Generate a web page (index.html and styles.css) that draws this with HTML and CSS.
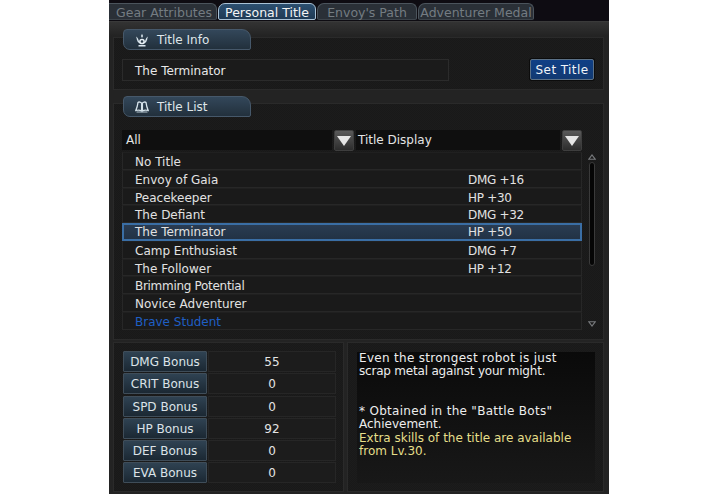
FILE: index.html
```html
<!DOCTYPE html>
<html lang="en">
<head>
<meta charset="utf-8">
<title>Personal Title</title>
<link rel="stylesheet" href="styles.css">
</head>
<body>
<div class="window">
  <nav class="tabs">
    <span class="tab tab-gear">Gear Attributes</span>
    <span class="tab tab-active">Personal Title</span>
    <span class="tab tab-path">Envoy's Path</span>
    <span class="tab tab-medal">Adventurer Medal</span>
  </nav>
  <main class="main">
    <section class="panel panel-info">
      <div class="label-tab">
        <svg class="icon" viewBox="0 0 14 14"><path d="M7 .8 8 3 7 5 6 3zM1 3.500l1.500 1.200L3 7 1.800 5.800zM13 3.500l-1.500 1.200L11 7l1.200-1.200z" fill="#dce8f0"/><path d="M2.200 5.500C2.800 8 3.800 9.300 5 10M11.800 5.500C11.200 8 10.200 9.300 9 10M3.500 12.800h7" fill="none" stroke="#dce8f0" stroke-width="1.400"/><circle cx="7" cy="8.500" r="2.100" fill="none" stroke="#e6eff5" stroke-width="1.500"/></svg>
        <span>Title Info</span>
      </div>
      <div class="info-row">
        <div class="field">The Terminator</div>
        <button class="set-btn">Set Title</button>
      </div>
    </section>
    <section class="panel panel-list">
      <div class="label-tab">
        <svg class="icon" viewBox="0 0 14 14"><path d="M6.600 3.200C5.800 2 3.800 1.700 3 2.400 2.700 5 2 7.800.8 10.500c2-.6 4.300-.5 5.800.5zM7.400 3.200C8.200 2 10.200 1.700 11 2.400c.3 2.600 1 5.400 2.200 8.100-2-.6-4.300-.5-5.800.5z" fill="none" stroke="#d5e2ea" stroke-width="1.300"/><path d="M1.500 12h11" stroke="#b9c9d4" stroke-width="1"/></svg>
        <span>Title List</span>
      </div>
      <div class="list-area">
        <div class="list-col">
          <div class="filters">
            <div class="select select-a">All</div>
            <div class="arrow-btn"><i class="tri"></i></div>
            <div class="select select-b">Title Display</div>
            <div class="arrow-btn"><i class="tri"></i></div>
          </div>
          <ul class="rows">
            <li class="row"><span class="name">No Title</span></li>
            <li class="row"><span class="name">Envoy of Gaia</span><span class="val">DMG +16</span></li>
            <li class="row"><span class="name">Peacekeeper</span><span class="val">HP +30</span></li>
            <li class="row"><span class="name">The Defiant</span><span class="val">DMG +32</span></li>
            <li class="row row-selected"><span class="name">The Terminator</span><span class="val">HP +50</span></li>
            <li class="row"><span class="name">Camp Enthusiast</span><span class="val">DMG +7</span></li>
            <li class="row"><span class="name">The Follower</span><span class="val">HP +12</span></li>
            <li class="row"><span class="name tight">Brimming Potential</span></li>
            <li class="row"><span class="name">Novice Adventurer</span></li>
            <li class="row row-blue"><span class="name">Brave Student</span></li>
          </ul>
        </div>
        <div class="scrollbar">
          <svg class="chev" viewBox="0 0 8 6"><path d="M.7 5.300 4 1l3.300 4.300z" fill="none" stroke="#77797c" stroke-width="1.100"/></svg>
          <div class="track"></div>
          <svg class="chev" viewBox="0 0 8 6"><path d="M.7.700 4 5 7.300.700z" fill="none" stroke="#77797c" stroke-width="1.100"/></svg>
        </div>
      </div>
    </section>
    <div class="bottom">
      <section class="panel panel-stats">
        <div class="stat"><span class="stat-name">DMG Bonus</span><span class="stat-val">55</span></div>
        <div class="stat"><span class="stat-name">CRIT Bonus</span><span class="stat-val">0</span></div>
        <div class="stat"><span class="stat-name">SPD Bonus</span><span class="stat-val">0</span></div>
        <div class="stat"><span class="stat-name">HP Bonus</span><span class="stat-val">92</span></div>
        <div class="stat"><span class="stat-name">DEF Bonus</span><span class="stat-val">0</span></div>
        <div class="stat"><span class="stat-name">EVA Bonus</span><span class="stat-val">0</span></div>
      </section>
      <section class="panel panel-desc">
        <div class="desc">
          <p><span class="wide">Even the strongest robot is just</span><br><span class="narrow">scrap metal against your might.</span></p>
          <p class="obtain"><span class="wide">* Obtained in the "Battle Bots"</span><br>Achievement.</p>
          <p class="extra">Extra skills of the title are available<br>from Lv.30.</p>
        </div>
      </section>
    </div>
  </main>
</div>
</body>
</html>
```
FILE: styles.css
```css
* { box-sizing: border-box; }
html, body { margin: 0; padding: 0; background: #fff; }
body { height: 494px; overflow: hidden; display: flex; justify-content: flex-start; padding-left: 109px; }
.window {
  width: 500px; height: 494px; display: flex; flex-direction: column;
  font-family: "DejaVu Sans", sans-serif; font-size: 12px; color: #e4e4e4;
  background: #1d1d1d;
}
.tabs {
  height: 22px; background: #0e0c12; display: flex; align-items: flex-start;
  padding: 3px 0 0 0; gap: 1px; border-bottom: 1px solid #3a3a3a;
}
.tab {
  height: 17px; line-height: 17px; text-align: center; color: #747c82; font-size: 12.500px;
  background: #2a3037; border: 1px solid #4b545c; border-bottom-color: #3d444b;
  border-radius: 7px 6px 2px 2px; white-space: nowrap;
}
.tab-gear { width: 108px; border-left: 0; border-radius: 0 6px 2px 0; text-indent: 3px; }
.tab-active {
  width: 98px; color: #f4f4f4; background: linear-gradient(#2c4f70, #1f3a54);
  border-color: #a9c2d6;
}
.tab-path { width: 100px; }
.tab-medal { width: 116px; }
.main {
  flex: 1; display: flex; flex-direction: column; padding: 15px 5px 2px 4px;
  background: linear-gradient(#333, #232323 14px);
}
.panel {
  border: 1px solid #2a2a2a;
  background: repeating-conic-gradient(#1c1c1c 0 25%, #191919 0 50%) 0 0 / 2px 2px;
}
.label-tab {
  width: 128px; height: 21px; margin: -9px 0 0 9px; display: flex; align-items: center; gap: 8px; padding-left: 11px;
  background: linear-gradient(#33475a, #22303c); border: 1px solid #46586a; border-radius: 4px 9px 2px 7px;
  color: #dfe6ea; line-height: 23px;
}
.label-tab span { display: block; height: 21px; }
.icon { width: 14px; height: 14px; flex: none; }
.panel-info { height: 53px; }
.info-row { display: flex; align-items: flex-start; padding: 9px 9px 0 8px; justify-content: space-between; }
.field { width: 327px; height: 22px; line-height: 22px; padding-left: 12px; background: #1b1b1b; border: 1px solid #2b2b2b; color: #e8e8e8; }
.set-btn {
  width: 64px; height: 21px; padding: 1px 0 0; font: inherit; letter-spacing: .4px; color: #f0f4f8; cursor: pointer;
  background: linear-gradient(#0f3f86, #123a72); border: 1px solid #5b7187; border-radius: 2px;
  box-shadow: 0 0 0 1px #0c0c0c;
}
.panel-list { height: 237px; margin-top: 13px; }
.panel-list .label-tab { margin-top: -8px; }
.list-area { display: flex; padding: 13px 8px 0 8px; gap: 6px; }
.list-col { width: 461px; }
.filters { display: flex; height: 21px; gap: 2px; }
.select { height: 20px; line-height: 21px; background: #0f0f0f; }
.select-a { width: 210px; padding-left: 4px; }
.select-b { width: 204px; padding-left: 2px; }
.arrow-btn {
  width: 20px; height: 21px; display: flex; align-items: center; justify-content: center;
  background: linear-gradient(#5a5a5a, #2c2c2c); border: 1px solid #3e3e3e; border-radius: 2px;
}
.tri { width: 0; height: 0; border-left: 7px solid transparent; border-right: 7px solid transparent; border-top: 10px solid #e6e6e6; }
.rows { list-style: none; margin: 1px 0 0; padding: 0; }
.row {
  height: 17.760px; line-height: 18px; display: flex; padding-left: 12px;
  background: #1a1a1a; border: 1px solid #272727; border-top-color: #202020; color: #e2e2e2;
}
.name { width: 333px; }
.tight { letter-spacing: -.3px; }
.val { letter-spacing: -.3px; }
.row-selected { background: linear-gradient(#2a3c52, #223245); border: 2px solid #3a6ea5; padding-left: 11px; line-height: 15px; }
.row-blue { color: #1f5fc4; }
.scrollbar { width: 8px; display: flex; flex-direction: column; align-items: center; padding-top: 24px; }
.chev { width: 8px; height: 6px; flex: none; }
.track { width: 6px; height: 104px; margin: 2px 0 55px; background: #050505; border: 1px solid #3a3a3a; border-radius: 3px; }
.bottom { display: flex; gap: 3px; margin-top: 2px; height: 150px; }
.panel-stats { width: 231px; padding: 8px 7px 0 9px; display: flex; flex-direction: column; gap: 1.300px; }
.stat { display: flex; height: 21px; }
.stat-name {
  width: 84px; text-align: center; line-height: 21px; color: #dce3e8;
  background: linear-gradient(#2f4252, #1b2833); border: 1px solid #3f4d59; border-radius: 1px;
}
.stat-val { flex: 1; text-align: center; line-height: 21px; background: #1c1c1c; border: 1px solid #262626; margin-left: 1px; }
.panel-desc { flex: 1; padding: 9px 8px 8px 9px; }
.desc { height: 131px; background: linear-gradient(#0a0a0a, #181818); padding: 0 2px; line-height: 13.300px; color: #ededed; }
.desc p { margin: 0; }
.wide { letter-spacing: .3px; }
.narrow { letter-spacing: -.2px; }
.obtain { padding-top: 26.600px; }
.extra { color: #e6df8a; }
```
